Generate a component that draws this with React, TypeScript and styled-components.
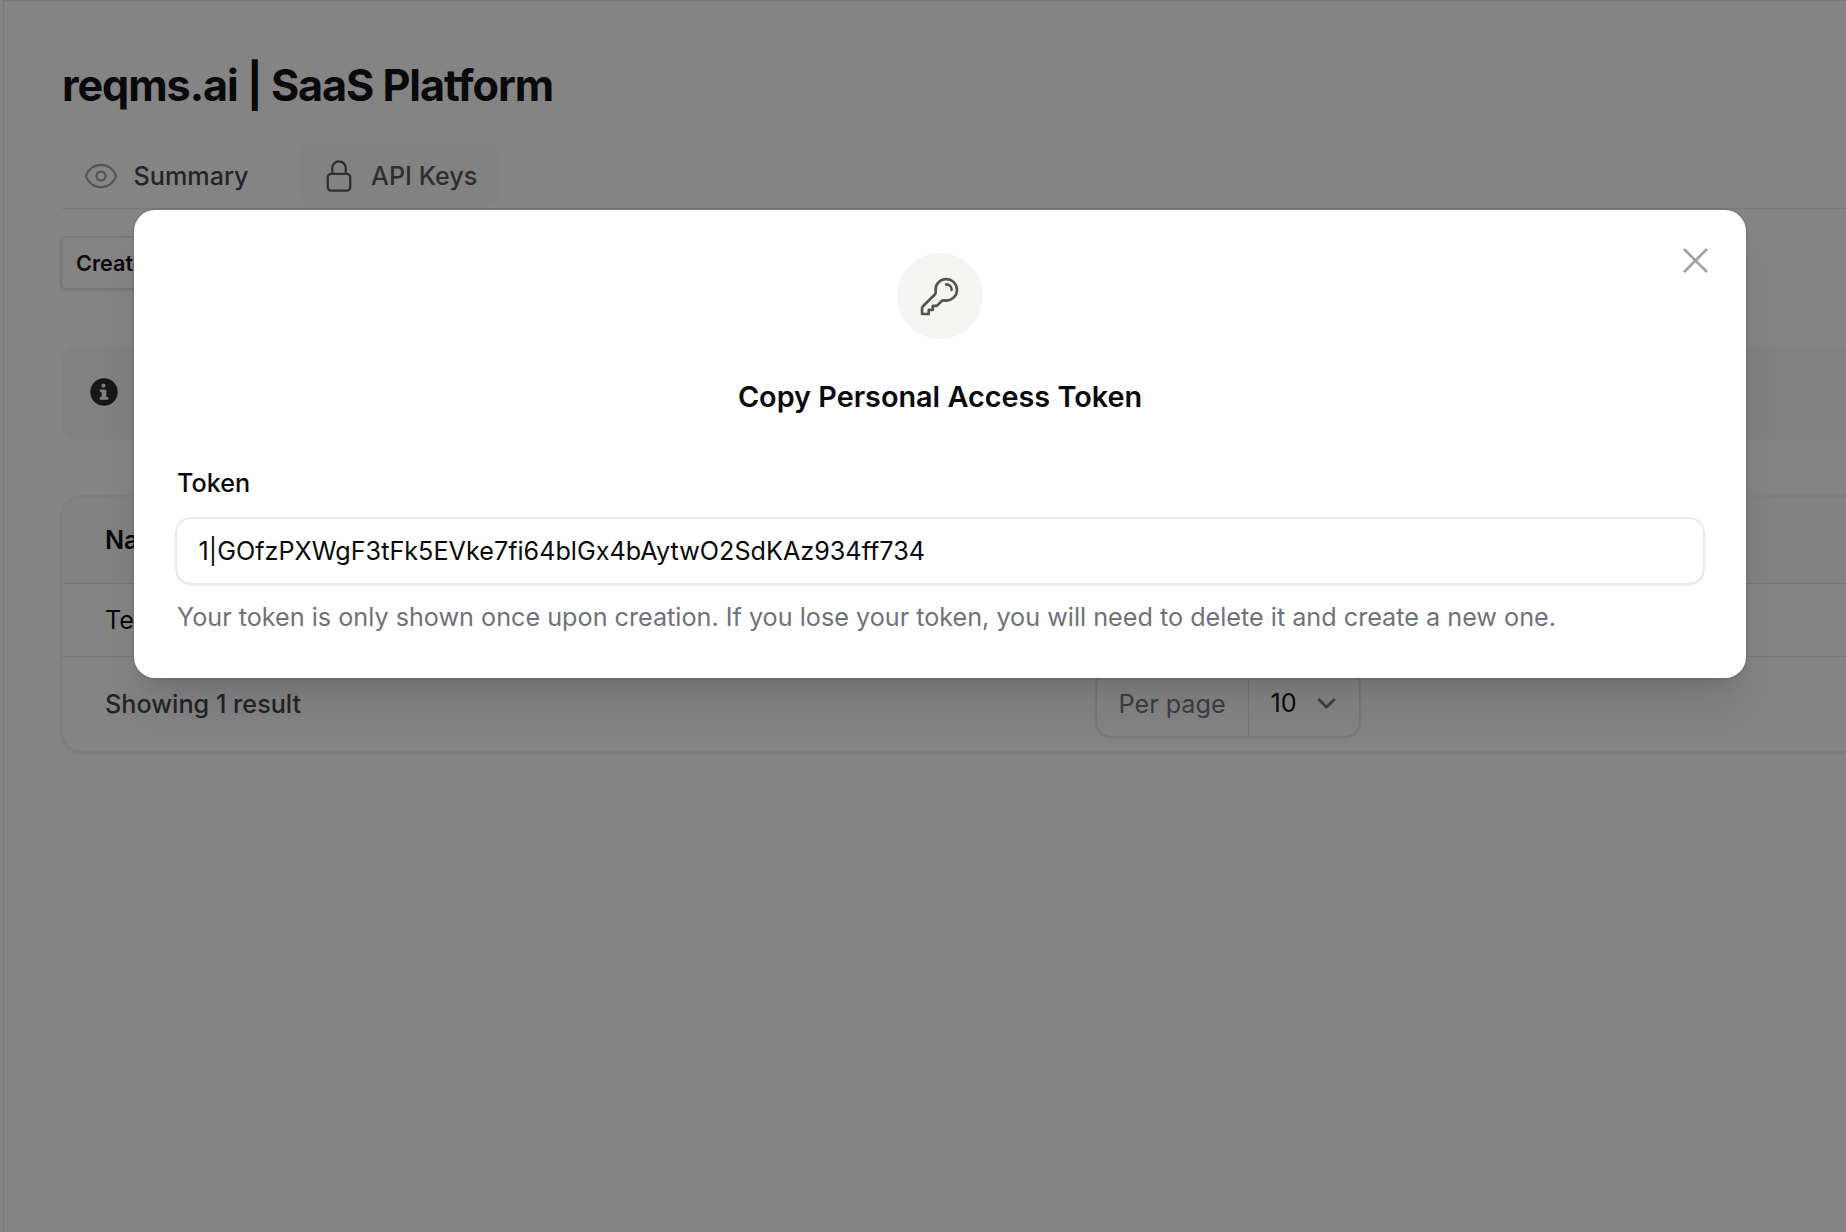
import React from "react";
import styled, { createGlobalStyle } from "styled-components";
import {
  HiOutlineEye,
  HiOutlineKey,
  HiOutlineLockClosed,
  HiOutlineXMark,
} from "react-icons/hi2";

const GlobalStyle = createGlobalStyle`
  *, *::before, *::after { box-sizing: border-box; }
  body {
    margin: 0;
    background: #fff;
    color: #09090b;
    font-family: Inter, "Noto Sans", sans-serif;
    font-size: 25.2px;
    line-height: 36px;
    -webkit-font-smoothing: antialiased;
  }
`;

const Screen = styled.div`
  position: relative;
  display: flex;
  width: 1846px;
  height: 1232px;
  overflow: hidden;
`;

const SidebarEdge = styled.div`
  flex: none;
  width: 4px;
  border-right: 1px solid #e4e4e7;
`;

const Main = styled.main`
  flex: none;
  width: 2448px;
  padding: 52px 58px 0;
  border-top: 1px solid #e4e4e7;
`;

const PageTitle = styled.h1`
  margin: 0;
  font-size: 43.2px;
  line-height: 64px;
  font-weight: 700;
  letter-spacing: -0.025em;
  white-space: nowrap;
`;

const Tabs = styled.nav`
  display: flex;
  gap: 27px;
  margin-top: 26px;
  padding-bottom: 1px;
  border-bottom: 1px solid #e4e4e7;
`;

const Tab = styled.button<{ $active?: boolean }>`
  display: flex;
  align-items: center;
  gap: 14.5px;
  height: 64px;
  padding: 2px 22px 0 ${(p) => (p.$active ? 23 : 21)}px;
  border: 0;
  border-radius: 14px;
  background: ${(p) => (p.$active ? "#fafafa" : "transparent")};
  color: ${(p) => (p.$active ? "#57534e" : "#3f3f46")};
  font: inherit;
  font-weight: 500;

  svg {
    width: 36px;
    height: 36px;
    color: ${(p) => (p.$active ? "#57534e" : "#a1a1aa")};
  }
`;

const CreateButton = styled.button`
  display: block;
  height: 50px;
  margin-top: 28.5px;
  padding: 0 14px;
  border: 0;
  border-radius: 4px;
  background: #fff;
  box-shadow: 0 0 0 1.8px #e2e2e4, 0 2px 4px rgba(0, 0, 0, 0.1);
  color: #09090b;
  font: inherit;
  font-size: 21.6px;
  font-weight: 600;
`;

const Notice = styled.div`
  display: flex;
  align-items: center;
  height: 93px;
  margin-top: 58px;
  padding-left: 28.4px;
  border-radius: 14px;
  background: #f8f8f8;
  color: #27272a;
`;

const Table = styled.section`
  margin-top: 58.5px;
  border-radius: 20px;
  overflow: hidden;
  box-shadow: 0 0 0 1.8px #f0f0f1, 0 2px 4px rgba(0, 0, 0, 0.1);
`;

const TableRow = styled.div<{ $head?: boolean }>`
  display: flex;
  align-items: center;
  height: ${(p) => (p.$head ? 86.5 : 73)}px;
  padding-left: 43px;
  border-bottom: 1px solid #e4e4e7;
  background: ${(p) => (p.$head ? "#fafafa" : "#fff")};
  font-weight: ${(p) => (p.$head ? 600 : 400)};
`;

const TableFooter = styled.div`
  display: grid;
  grid-template-columns: 1fr auto 1fr;
  align-items: center;
  height: 94px;
  padding: 0 43px;
`;

const ResultCount = styled.span`
  color: #3f3f46;
  font-weight: 500;
`;

const PerPage = styled.div`
  display: flex;
  width: 262px;
  height: 64px;
  border-radius: 14px;
  box-shadow: 0 0 0 1.8px #e6e6e7, 0 2px 4px rgba(0, 0, 0, 0.08);
`;

const PerPageLabel = styled.span`
  display: flex;
  align-items: center;
  width: 152px;
  padding-left: 21.5px;
  border-right: 1px solid #e4e4e7;
  color: #71717a;
`;

const PerPageValue = styled.span`
  display: flex;
  align-items: center;
  justify-content: space-between;
  flex: 1;
  padding: 0 14px 1px 21.5px;
`;

const Backdrop = styled.div`
  position: absolute;
  inset: 0;
  display: flex;
  align-items: flex-start;
  justify-content: center;
  padding: 210px 100px 0 134px;
  background: rgba(9, 9, 11, 0.5);
`;

const Modal = styled.div`
  position: relative;
  flex: 1;
  height: 468px;
  padding: 43px;
  border-radius: 21px;
  background: #fff;
  box-shadow: 0 0 0 1.8px rgba(9, 9, 11, 0.05),
    0 36px 45px -9px rgba(0, 0, 0, 0.1), 0 14px 18px -11px rgba(0, 0, 0, 0.1);
`;

const CloseButton = styled.button`
  position: absolute;
  top: 29px;
  right: 29.5px;
  display: flex;
  padding: 0;
  border: 0;
  background: none;
  color: #a1a1aa;

  svg {
    width: 43px;
    height: 43px;
  }
`;

const ModalHeader = styled.header`
  display: flex;
  flex-direction: column;
  align-items: center;
`;

const IconCircle = styled.div`
  display: flex;
  align-items: center;
  justify-content: center;
  width: 86px;
  height: 86px;
  padding-right: 1px;
  border-radius: 50%;
  background: #f5f5f4;
  color: #57534e;

  svg {
    width: 43px;
    height: 43px;
  }
`;

const ModalTitle = styled.h2`
  margin: 36px 0 0;
  font-size: 28.8px;
  line-height: 43px;
  font-weight: 600;
`;

const Field = styled.label`
  display: flex;
  flex-direction: column;
  margin-top: 47px;
`;

const FieldLabel = styled.span`
  line-height: 36px;
  font-weight: 500;
`;

const TokenInput = styled.input`
  height: 64px;
  margin-top: 18px;
  padding: 0 21.6px;
  border: 0;
  border-radius: 14px;
  outline: 0;
  background: #fff;
  box-shadow: 0 0 0 1.8px #e6e6e7, 0 2px 4px rgba(0, 0, 0, 0.08);
  color: #09090b;
  font: inherit;
`;

const Helper = styled.span`
  margin-top: 16px;
  color: #71717a;
  white-space: nowrap;
`;

function InfoIcon() {
  return (
    <svg width="28" height="28" viewBox="0 0 28 28" fill="currentColor">
      <path
        fillRule="evenodd"
        d="M14 .3a13.7 13.7 0 1 1 0 27.4A13.7 13.7 0 0 1 14 .3ZM13.5 5.5a2.1 2.1 0 1 0 0 4.2 2.1 2.1 0 0 0 0-4.2ZM10.7 11.5a.8.8 0 0 0-.8.8v1.2c0 .4.4.8.8.8h1v4.6h-1.2a.8.8 0 0 0-.8.8v1.2c0 .4.4.8.8.8h7a.8.8 0 0 0 .8-.8v-1.2a.8.8 0 0 0-.8-.8h-1.2v-6.6a.8.8 0 0 0-.8-.8Z"
      />
    </svg>
  );
}

function Chevron() {
  return (
    <svg width="37" height="37" viewBox="0 0 20 20" fill="none">
      <path
        d="m6 8 4 4 4-4"
        stroke="#6b7280"
        strokeWidth="1.5"
        strokeLinecap="round"
        strokeLinejoin="round"
      />
    </svg>
  );
}

export default function App() {
  return (
    <>
      <GlobalStyle />
      <Screen>
        <SidebarEdge />
        <Main>
          <PageTitle>reqms.ai | SaaS Platform</PageTitle>
          <Tabs>
            <Tab>
              <HiOutlineEye />
              Summary
            </Tab>
            <Tab $active>
              <HiOutlineLockClosed />
              API Keys
            </Tab>
          </Tabs>
          <CreateButton>Create</CreateButton>
          <Notice>
            <InfoIcon />
          </Notice>
          <Table>
            <TableRow $head>Name</TableRow>
            <TableRow>Test</TableRow>
            <TableFooter>
              <ResultCount>Showing 1 result</ResultCount>
              <PerPage>
                <PerPageLabel>Per page</PerPageLabel>
                <PerPageValue>
                  10
                  <Chevron />
                </PerPageValue>
              </PerPage>
            </TableFooter>
          </Table>
        </Main>
        <Backdrop>
          <Modal role="dialog">
            <CloseButton aria-label="Close">
              <HiOutlineXMark />
            </CloseButton>
            <ModalHeader>
              <IconCircle>
                <HiOutlineKey />
              </IconCircle>
              <ModalTitle>Copy Personal Access Token</ModalTitle>
            </ModalHeader>
            <Field>
              <FieldLabel>Token</FieldLabel>
              <TokenInput
                readOnly
                value="1|GOfzPXWgF3tFk5EVke7fi64blGx4bAytwO2SdKAz934ff734"
              />
              <Helper>
                Your token is only shown once upon creation. If you lose your
                token, you will need to delete it and create a new one.
              </Helper>
            </Field>
          </Modal>
        </Backdrop>
      </Screen>
    </>
  );
}
